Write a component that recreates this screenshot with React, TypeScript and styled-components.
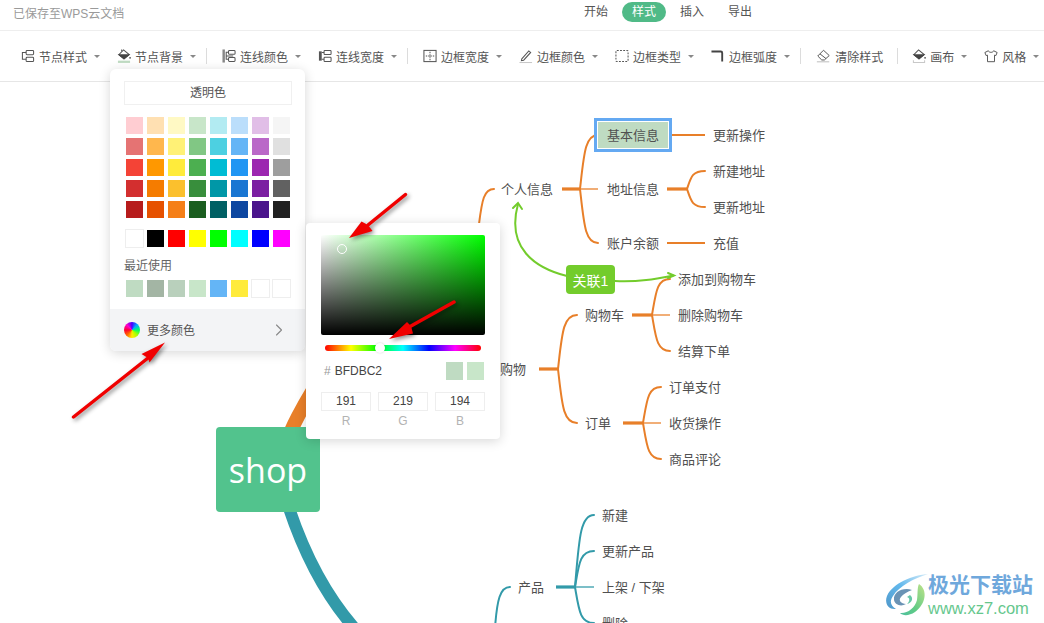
import React from "react";
import styled, { createGlobalStyle } from "styled-components";
import { ChevronRight } from "lucide-react";

const CJK = `"Liberation Sans", "Noto Sans CJK SC", sans-serif`;

const Global = createGlobalStyle`
  html, body { margin: 0; padding: 0; background: #fff; }
  body { font-family: ${CJK}; }
`;

const Page = styled.div`
  position: relative;
  width: 1044px;
  height: 623px;
  overflow: hidden;
  display: flex;
  flex-direction: column;
  background: #fff;
  color: #555;
`;

const Header = styled.header`
  height: 30px;
  flex: none;
  display: flex;
  align-items: center;
  border-bottom: 1px solid #eeeeee;
  padding-left: 13px;
`;
const SavedNote = styled.div`
  width: 561px;
  font-size: 12px;
  color: #9a9a9a;
  margin-top: -5px;
`;
const Tabs = styled.nav`
  display: flex;
  gap: 4px;
  margin-top: -6px;
`;
const Tab = styled.div<{ $active?: boolean }>`
  width: 44px;
  height: 20px;
  line-height: 21px;
  text-align: center;
  font-size: 12px;
  border-radius: 10px;
  color: ${(p) => (p.$active ? "#fff" : "#555")};
  background: ${(p) => (p.$active ? "#50ba87" : "transparent")};
`;

const Toolbar = styled.div`
  height: 50px;
  flex: none;
  display: flex;
  align-items: center;
  padding-left: 21px;
  border-bottom: 1px solid #e6e6e6;
  box-sizing: content-box;
`;
const Group = styled.div`
  display: flex;
  align-items: center;
  gap: 17px;
`;
const Separator = styled.div<{ $before?: number; $after?: number }>`
  width: 1px;
  height: 16px;
  background: #dcdcdc;
  margin: 0 ${(p) => p.$after ?? 15}px 0 ${(p) => p.$before ?? 10}px;
`;
const ToolItem = styled.div`
  display: flex;
  align-items: center;
  font-size: 12px;
  color: #555;
  white-space: nowrap;
`;
const IconBox = styled.span<{ $w?: number }>`
  width: ${(p) => p.$w ?? 14}px;
  height: 16px;
  margin-right: 4px;
  display: flex;
  align-items: center;
  justify-content: center;
`;
const Caret = styled.span`
  width: 0;
  height: 0;
  margin-left: 7px;
  border-left: 3px solid transparent;
  border-right: 3px solid transparent;
  border-top: 3px solid #888;
`;

const Ico: React.FC<{ children: React.ReactNode; w?: number }> = ({ children, w = 15 }) => (
  <svg width={w} height="16" viewBox={`0 0 ${w} 16`} fill="none" stroke="#555" strokeWidth="1.1">
    {children}
  </svg>
);

const toolIcons: Record<string, React.ReactNode> = {
  node: (
    <Ico>
      <rect x="5.5" y="2" width="8" height="4.6" rx="1" />
      <rect x="5.5" y="9.4" width="8" height="4.6" rx="1" />
      <path d="M5.5 4.2H1.5V11.6H5.5" />
    </Ico>
  ),
  bg: (
    <Ico>
      <path d="M7 1.5L13 6.5L7.5 11L2 6.5Z" fill="#fff" />
      <path d="M2.2 6.8H12.8L7.5 11Z" fill="#444" stroke="#444" />
      <path d="M5 3V1" />
      <circle cx="14" cy="10" r="0.9" fill="#444" stroke="none" />
      <rect x="1" y="13" width="13" height="2.4" fill="#bfdbc2" stroke="none" />
    </Ico>
  ),
  line: (
    <Ico>
      <rect x="0.5" y="1" width="2.6" height="14" fill="#888" stroke="none" />
      <rect x="7" y="2" width="7" height="4.2" rx="1" />
      <rect x="7" y="9.6" width="7" height="4.2" rx="1" />
      <path d="M7 4H4.5V8H12M4.5 8V11.6H7" />
    </Ico>
  ),
  lineW: (
    <Ico>
      <path d="M1 3H4V13H1Z" fill="#555" stroke="none" />
      <rect x="6.5" y="2" width="7.5" height="4.4" rx="0.8" />
      <rect x="6.5" y="9.4" width="7.5" height="4.4" rx="0.8" />
      <path d="M4 4.2H6.5M4 11.6H6.5" />
    </Ico>
  ),
  frame: (
    <Ico>
      <rect x="1" y="2" width="13" height="12" />
      <path d="M7.5 3.5V12.5M3 8H12" strokeDasharray="1.5 1" />
    </Ico>
  ),
  pen: (
    <Ico>
      <path d="M3 11L10.5 2.5L12.5 4.2L5 12.5L2.6 13Z" />
      <path d="M0.5 15H14" stroke="#c8c8c8" />
    </Ico>
  ),
  dash: (
    <Ico>
      <rect x="1" y="2" width="13" height="12" rx="1" strokeDasharray="2 1.4" />
    </Ico>
  ),
  corner: (
    <Ico>
      <path d="M0.5 3.2H10.5Q12 3.2 12 4.7V14" strokeWidth="2" stroke="#444" />
    </Ico>
  ),
  erase: (
    <Ico w={17}>
      <path d="M8.5 1.5L15 7.5L9.5 12.5H6.5L2 8Z" />
      <path d="M4.5 5.6L11.4 11" />
      <path d="M1 14.6H15" stroke="#bbb" />
    </Ico>
  ),
  canvas: (
    <Ico>
      <path d="M7 1.5L13 6.5L7.5 11L2 6.5Z" fill="#fff" />
      <path d="M2.2 6.8H12.8L7.5 11Z" fill="#444" stroke="#444" />
      <circle cx="14" cy="10" r="0.9" fill="#444" stroke="none" />
      <path d="M1.5 12.5V15H13.5V12.5" stroke="#c8c8c8" />
    </Ico>
  ),
  shirt: (
    <Ico w={16}>
      <path d="M5 2L1 4L2.4 7.5L4 7V14.5H12V7L13.6 7.5L15 4L11 2C10.5 4.4 5.5 4.4 5 2Z" />
    </Ico>
  ),
};

const Tool: React.FC<{ icon: string; label: string; w?: number; noCaret?: boolean }> = ({ icon, label, w, noCaret }) => (
  <ToolItem>
    <IconBox $w={w}>{toolIcons[icon]}</IconBox>
    {label}
    {!noCaret && <Caret />}
  </ToolItem>
);

/* ---------- Mind map canvas ---------- */
const Canvas = styled.main`
  position: relative;
  flex: 1;
`;
const MapLines = styled.svg`
  position: absolute;
  inset: 0;
  width: 1044px;
  height: 541px;
`;
const Node = styled.div<{ $x: number; $y: number }>`
  position: absolute;
  left: ${(p) => p.$x}px;
  top: ${(p) => p.$y - 81}px;
  transform: translateY(-50%);
  font-size: 13px;
  line-height: 18px;
  color: #505050;
  white-space: nowrap;
`;
const SelectedNode = styled.div`
  position: absolute;
  left: 594px;
  top: 36px;
  width: 78px;
  height: 34px;
  box-sizing: border-box;
  border: 3px solid #64a9f2;
  padding: 1px;
  background: #fff;
`;
const SelectedFill = styled.div`
  height: 100%;
  box-sizing: border-box;
  padding-bottom: 2px;
  background: #bfdbc2;
  display: flex;
  align-items: center;
  justify-content: center;
  font-size: 13px;
  color: #505050;
`;
const RelationTag = styled.div`
  position: absolute;
  left: 566px;
  top: 183px;
  width: 49px;
  height: 29px;
  border-radius: 4px;
  background: #73cc2c;
  color: #fff;
  font-size: 14px;
  display: flex;
  align-items: center;
  justify-content: center;
`;
const RootNode = styled.div`
  position: absolute;
  left: 216px;
  top: 345px;
  width: 104px;
  height: 85px;
  border-radius: 4px;
  background: #52c38d;
  color: #fff;
  font-family: "Open Sans", sans-serif;
  font-size: 34px;
  display: flex;
  align-items: center;
  justify-content: center;
`;

const nodes: [string, number, number][] = [
  ["个人信息", 501, 189],
  ["更新操作", 713, 135],
  ["地址信息", 607, 189],
  ["新建地址", 713, 171],
  ["更新地址", 713, 207],
  ["账户余额", 607, 243],
  ["充值", 713, 243],
  ["添加到购物车", 678, 279],
  ["购物车", 585, 315],
  ["删除购物车", 678, 315],
  ["结算下单", 678, 351],
  ["购物", 500, 369],
  ["订单", 585, 423],
  ["订单支付", 669, 387],
  ["收货操作", 669, 423],
  ["商品评论", 669, 459],
  ["新建", 602, 515],
  ["更新产品", 602, 551],
  ["上架 / 下架", 602, 587],
  ["删除", 602, 623],
  ["产品", 518, 587],
];

const ORANGE = "#e87f29";
const TEAL = "#329aa9";
const GREEN = "#73cc2c";

const Fork: React.FC<{ color: string; from: number; mid: number; end: number; y: number; ys: number[] }> = ({
  color,
  from,
  mid,
  end,
  y,
  ys,
}) => (
  <g fill="none" stroke={color}>
    <path d={`M${from} ${y}H${mid}`} strokeWidth="3.2" />
    {ys.map((t) =>
      t === y ? (
        <path key={t} d={`M${mid} ${y}H${end}`} strokeWidth="1.6" opacity="0.8" />
      ) : (
        <path
          key={t}
          d={`M${mid} ${y}C${mid + 4} ${y + (t - y) * 0.65} ${mid + 5} ${t} ${end} ${t}`}
          strokeWidth="2"
          strokeLinecap="round"
        />
      ),
    )}
  </g>
);

/* ---------- Colour popover ---------- */
const ColorPanel = styled.div`
  position: absolute;
  left: 110px;
  top: 69px;
  width: 195px;
  height: 282px;
  background: #fff;
  border-radius: 6px;
  box-shadow: 0 2px 12px rgba(0, 0, 0, 0.16);
  display: flex;
  flex-direction: column;
  overflow: hidden;
`;
const PanelBody = styled.div`
  padding: 12px 13px 12px 14px;
  flex: 1;
`;
const Transparent = styled.div`
  height: 24px;
  box-sizing: border-box;
  border: 1px solid #f0f0f0;
  text-align: center;
  line-height: 22px;
  font-size: 12px;
  color: #555;
`;
const SwatchGrid = styled.div<{ $top: number }>`
  display: grid;
  grid-template-columns: repeat(8, 17px);
  gap: 4px;
  margin: ${(p) => p.$top}px 0 0 2px;
`;
const Swatch = styled.div<{ $color: string; $outlined?: boolean }>`
  width: 17px;
  height: 17px;
  background: ${(p) => p.$color};
  box-shadow: ${(p) => (p.$outlined ? "0 0 0 1px #eeeeee" : "none")};
`;
const RecentLabel = styled.div`
  margin-top: 10px;
  height: 18px;
  line-height: 18px;
  font-size: 12px;
  color: #666;
`;
const MoreRow = styled.div`
  height: 42px;
  flex: none;
  background: #f3f4f6;
  display: flex;
  align-items: center;
  padding: 0 16px 0 14px;
  font-size: 12px;
  color: #555;
`;
const Wheel = styled.span`
  width: 16px;
  height: 16px;
  border-radius: 50%;
  margin-right: 7px;
  background: conic-gradient(#4400ff, #00aaff, #00ff66, #aaff00, #ffee00, #ff6600, #ff0033, #ff00cc, #4400ff);
`;
const MoreText = styled.span`
  flex: 1;
  padding-bottom: 2px;
`;

const Picker = styled.div`
  position: absolute;
  left: 306px;
  top: 223px;
  width: 194px;
  height: 216px;
  box-sizing: border-box;
  padding: 12px 15px;
  background: #fff;
  border-radius: 4px;
  box-shadow: 0 2px 12px rgba(0, 0, 0, 0.16);
`;
const Saturation = styled.div`
  position: relative;
  width: 164px;
  height: 100px;
  border-radius: 2px;
  background: linear-gradient(to top, #000, rgba(0, 0, 0, 0)), linear-gradient(to right, #fff, #00ff00);
`;
const SatHandle = styled.span`
  position: absolute;
  left: 16px;
  top: 9px;
  width: 10px;
  height: 10px;
  box-sizing: border-box;
  border: 1px solid #fff;
  border-radius: 50%;
`;
const HueBar = styled.div`
  position: relative;
  width: 156px;
  height: 6px;
  margin: 10px 0 0 4px;
  border-radius: 3px;
  background: linear-gradient(to right, #f00, #ff0, #0f0, #0ff, #00f, #f0f, #f00);
`;
const HueThumb = styled.span`
  position: absolute;
  left: 50px;
  top: -2px;
  width: 10px;
  height: 10px;
  border-radius: 50%;
  background: #fff;
  box-shadow: 0 0 2px rgba(0, 0, 0, 0.2);
`;
const HexRow = styled.div`
  margin: 11px 1px 0 0;
  height: 18px;
  display: flex;
  align-items: center;
  font-size: 12px;
  color: #444;
`;
const Hash = styled.span`
  color: #999;
  margin: 0 4px 0 3px;
`;
const HexValue = styled.span`
  flex: 1;
`;
const Compare = styled.span<{ $color: string }>`
  width: 17px;
  height: 18px;
  margin-left: 4px;
  background: ${(p) => p.$color};
`;
const Channels = styled.div`
  margin-top: 12px;
  display: grid;
  grid-template-columns: repeat(3, 50px);
  gap: 7px;
`;
const Channel = styled.div`
  text-align: center;
`;
const ChannelValue = styled.div`
  height: 19px;
  box-sizing: border-box;
  border: 1px solid #eeeeee;
  line-height: 17px;
  font-size: 12px;
  color: #444;
`;
const ChannelName = styled.div`
  margin-top: 3px;
  font-size: 12px;
  line-height: 14px;
  color: #b3b3b3;
`;

/* ---------- Overlays ---------- */
const Annotations = styled.svg`
  position: absolute;
  left: 0;
  top: 0;
  width: 1044px;
  height: 623px;
  pointer-events: none;
  filter: drop-shadow(2px 2px 2px rgba(0, 0, 0, 0.45));
`;
const Watermark = styled.div`
  position: absolute;
  left: 885px;
  top: 572px;
  display: flex;
  align-items: flex-start;
`;
const WmText = styled.div`
  margin-left: -3px;
  padding-top: 1px;
`;
const WmTitle = styled.div`
  font-size: 21px;
  line-height: 24px;
  font-weight: 700;
  color: #6fa8dc;
  white-space: nowrap;
`;
const WmUrl = styled.div`
  font-size: 16.5px;
  line-height: 19px;
  margin-top: 2px;
  color: #66c78d;
  white-space: nowrap;
`;

const palette = [
  ["#ffcdd2", "#ffe0b2", "#fff9c4", "#c8e6c9", "#b2ebf2", "#bbdefb", "#e1bee7", "#f5f5f5"],
  ["#e57373", "#ffb74d", "#fff176", "#81c784", "#4dd0e1", "#64b5f6", "#ba68c8", "#e0e0e0"],
  ["#f44336", "#ff9800", "#ffeb3b", "#4caf50", "#00bcd4", "#2196f3", "#9c27b0", "#9e9e9e"],
  ["#d32f2f", "#f57c00", "#fbc02d", "#388e3c", "#0097a7", "#1976d2", "#7b1fa2", "#616161"],
  ["#b71c1c", "#e65100", "#f57f17", "#1b5e20", "#006064", "#0d47a1", "#4a148c", "#212121"],
].flat();
const basics = ["#ffffff", "#000000", "#ff0000", "#ffff00", "#00ff00", "#00ffff", "#0000ff", "#ff00ff"];
const recent = ["#bfdbc2", "#a3b5a4", "#b9d0bc", "#c8e6c9", "#64b5f6", "#ffeb3b", "#ffffff", "#ffffff"];

const RedArrow: React.FC<{ tail: string; tip: string; w1: string; w2: string; notch: string }> = ({
  tail,
  tip,
  w1,
  w2,
  notch,
}) => (
  <g>
    <path d={`M${tail}L${notch}`} stroke="#f00000" strokeWidth="3.5" strokeLinecap="round" fill="none" />
    <polygon points={`${tip} ${w1} ${notch} ${w2}`} fill="#f00000" />
  </g>
);

export default function App() {
  return (
    <Page>
      <Global />
      <Header>
        <SavedNote>已保存至WPS云文档</SavedNote>
        <Tabs>
          <Tab>开始</Tab>
          <Tab $active>样式</Tab>
          <Tab>插入</Tab>
          <Tab>导出</Tab>
        </Tabs>
      </Header>
      <Toolbar>
        <Group>
          <Tool icon="node" label="节点样式" />
          <Tool icon="bg" label="节点背景" />
        </Group>
        <Separator />
        <Group>
          <Tool icon="line" label="连线颜色" />
          <Tool icon="lineW" label="连线宽度" />
        </Group>
        <Separator />
        <Group>
          <Tool icon="frame" label="边框宽度" />
          <Tool icon="pen" label="边框颜色" />
          <Tool icon="dash" label="边框类型" />
          <Tool icon="corner" label="边框弧度" />
        </Group>
        <Separator />
        <Tool icon="erase" label="清除样式" w={15} noCaret />
        <Separator $before={14} $after={14} />
        <Group>
          <Tool icon="canvas" label="画布" />
          <Tool icon="shirt" label="风格" />
        </Group>
      </Toolbar>
      <Canvas>
        <MapLines viewBox="0 82 1044 541">
          <g fill="none">
            <path d="M289 436C295 420 305 403 330 362" stroke={ORANGE} strokeWidth="14" />
            <path d="M289 508C303 550 325 595 356 630" stroke={TEAL} strokeWidth="12" />
            <path d="M479 224C482 200 484 189 494 189" stroke={ORANGE} strokeWidth="2" strokeLinecap="round" />
            <path d="M510 587C500 587 497 600 495 628" stroke={TEAL} strokeWidth="2" strokeLinecap="round" />
          </g>
          <Fork color={ORANGE} from={562} mid={580} end={598} y={189} ys={[135, 189, 243]} />
          <Fork color={ORANGE} from={667} mid={687} end={705} y={189} ys={[171, 207]} />
          <Fork color={ORANGE} from={539} mid={558} end={577} y={369} ys={[315, 423]} />
          <Fork color={ORANGE} from={632} mid={652} end={670} y={315} ys={[279, 315, 351]} />
          <Fork color={ORANGE} from={623} mid={643} end={661} y={423} ys={[387, 423, 459]} />
          <Fork color={TEAL} from={556} mid={575} end={594} y={587} ys={[515, 551, 587, 623]} />
          <path d="M668 135H705M667 243H705" stroke={ORANGE} strokeWidth="2" fill="none" />
          <g fill="none" stroke={GREEN} strokeWidth="2" strokeLinecap="round">
            <path d="M567 276C535 268 506 248 518 204" />
            <path d="M513 208L518 203L522 209" />
            <path d="M615 281C640 282 655 279 673 275.5" />
            <path d="M668 273L674 275.5L668 278" />
          </g>
        </MapLines>
        {nodes.map(([t, x, y]) => (
          <Node key={t + x + y} $x={x} $y={y}>
            {t}
          </Node>
        ))}
        <SelectedNode>
          <SelectedFill>基本信息</SelectedFill>
        </SelectedNode>
        <RelationTag>关联1</RelationTag>
        <RootNode>shop</RootNode>
      </Canvas>

      <ColorPanel>
        <PanelBody>
          <Transparent>透明色</Transparent>
          <SwatchGrid $top={12}>
            {palette.map((c, i) => (
              <Swatch key={i} $color={c} />
            ))}
          </SwatchGrid>
          <SwatchGrid $top={12}>
            {basics.map((c, i) => (
              <Swatch key={i} $color={c} $outlined={c === "#ffffff"} />
            ))}
          </SwatchGrid>
          <RecentLabel>最近使用</RecentLabel>
          <SwatchGrid $top={5}>
            {recent.map((c, i) => (
              <Swatch key={i} $color={c} $outlined={c === "#ffffff"} />
            ))}
          </SwatchGrid>
        </PanelBody>
        <MoreRow>
          <Wheel />
          <MoreText>更多颜色</MoreText>
          <ChevronRight size={20} color="#888" strokeWidth={1.3} />
        </MoreRow>
      </ColorPanel>

      <Picker>
        <Saturation>
          <SatHandle />
        </Saturation>
        <HueBar>
          <HueThumb />
        </HueBar>
        <HexRow>
          <Hash>#</Hash>
          <HexValue>BFDBC2</HexValue>
          <Compare $color="#bfdbc2" />
          <Compare $color="#c8e6c9" />
        </HexRow>
        <Channels>
          {[
            ["191", "R"],
            ["219", "G"],
            ["194", "B"],
          ].map(([v, n]) => (
            <Channel key={n}>
              <ChannelValue>{v}</ChannelValue>
              <ChannelName>{n}</ChannelName>
            </Channel>
          ))}
        </Channels>
      </Picker>

      <Annotations viewBox="0 0 1044 623">
        <RedArrow tail="405.5 194.5" tip="349 238" w1="361.5 221.5" w2="372.5 231" notch="368 225" />
        <RedArrow tail="454 302" tip="389 339" w1="407 322" w2="413 333.5" notch="411 326" />
        <RedArrow tail="73.5 417" tip="165 342.5" w1="141.5 354" w2="149.5 362.5" notch="148 358" />
      </Annotations>

      <Watermark>
        <svg width="46" height="48" viewBox="0 0 46 48">
          <defs>
            <linearGradient id="wmBlue" x1="1" y1="0" x2="0" y2="1">
              <stop offset="0" stopColor="#d5ebf8" />
              <stop offset="0.5" stopColor="#62b8ec" />
              <stop offset="1" stopColor="#4f97c9" />
            </linearGradient>
            <linearGradient id="wmGreen" x1="1" y1="0" x2="0" y2="1">
              <stop offset="0" stopColor="#bfe28a" />
              <stop offset="0.6" stopColor="#5fcb85" />
              <stop offset="1" stopColor="#4fbfa0" />
            </linearGradient>
          </defs>
          <path d="M43 2C28 3 8 11 2 24C-1 32 4 38 11 37C6 34 4 30 8 24C14 14 30 6 43 2Z" fill="url(#wmBlue)" />
          <path d="M27 18C18 15 8 20 9 28C10 33 16 35 21 32C16 32 13 28 16 25C18 22 22 20 27 18Z" fill="#6a93b5" />
          <path d="M34 12C43 18 41 32 30 40C24 44 18 44 15 41C22 42 30 36 32 28C33 22 32 16 34 12Z" fill="url(#wmGreen)" />
          <path d="M25 23C29 26 27 31 22 32C25 29 25 26 22 25Z" fill="#67c7a8" />
        </svg>
        <WmText>
          <WmTitle>极光下载站</WmTitle>
          <WmUrl>www.xz7.com</WmUrl>
        </WmText>
      </Watermark>
    </Page>
  );
}
